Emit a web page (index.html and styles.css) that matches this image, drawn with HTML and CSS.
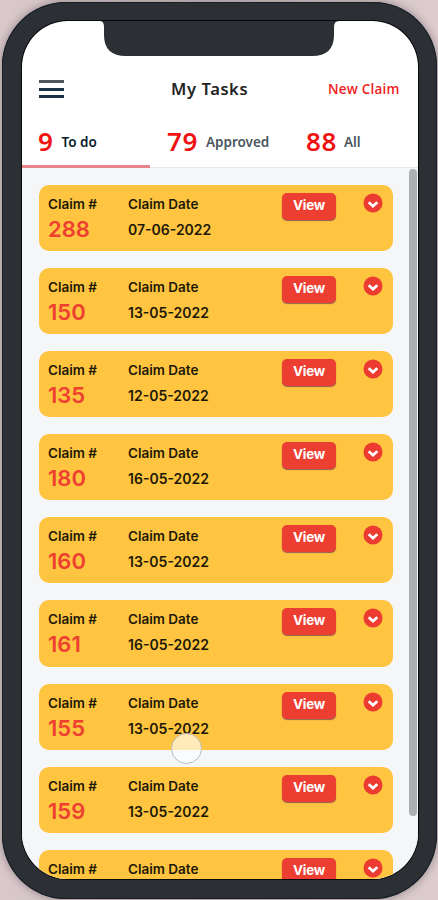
FILE: index.html
```html
<!DOCTYPE html>
<html lang="en">
<head>
<meta charset="utf-8">
<title>My Tasks</title>
<link rel="stylesheet" href="styles.css">
</head>
<body>
<div class="phone">
  <div class="screen">
    <svg class="notch" viewBox="0 0 239 36" aria-hidden="true"><path d="M0 0Q4 0 4 6V14Q4 35 26 35H212Q234 35 234 14V6Q234 0 239 0Z"/></svg>
    <header class="bar">
      <div class="menu"><i></i><i></i><i></i></div>
      <h1 class="title">My Tasks</h1>
      <a class="new">New Claim</a>
    </header>
    <nav class="tabs">
      <div class="tab active"><b>9</b><span>To do</span></div>
      <div class="tab approved"><b>79</b><span>Approved</span></div>
      <div class="tab all"><b>88</b><span>All</span></div>
    </nav>
    <main class="list" id="list"></main>
    <div class="scrollbar"></div>
    <div class="touch"></div>
  </div>
</div>
<script src="app.js"></script>
</body>
</html>
```
FILE: app.js
```js
const claims = [
  ["288", "07-06-2022"], ["150", "13-05-2022"], ["135", "12-05-2022"],
  ["180", "16-05-2022"], ["160", "13-05-2022"], ["161", "16-05-2022"],
  ["155", "13-05-2022"], ["159", "13-05-2022"], ["158", "13-05-2022"]
];
document.getElementById("list").innerHTML = claims.map(([id, date]) => `
  <article class="card">
    <div class="col claim"><span class="label">Claim #</span><span class="number">${id}</span></div>
    <div class="col when"><span class="label">Claim Date</span><span class="date">${date}</span></div>
    <button class="view">View</button>
    <svg class="expand" viewBox="0 0 20 20"><circle cx="10" cy="10" r="9.5"/><path d="M5.7 9.2L10 13.2L14.3 9.2"/></svg>
  </article>`).join("");
```
FILE: styles.css
```css
* { box-sizing: border-box; }
body {
  margin: 0;
  height: 900px;
  overflow: hidden;
  background: linear-gradient(90deg, #d9c9cb, #cbbcbf 50%, #ddcdcf);
  font-family: Inter, "Liberation Sans", sans-serif;
}
.phone {
  width: 435px;
  height: 897px;
  margin: 2px 0 0 2px;
  padding: 19px 19px 19px 20px;
  border-radius: 64px;
  background: #2c2f33;
  box-shadow: inset 0 0 0 1px #15202a, 0 0 10px #8f7f83;
}
.screen {
  position: relative;
  display: flex;
  flex-direction: column;
  height: 858px;
  overflow: hidden;
  border-radius: 46px;
  background: #fff;
  box-shadow: 0 0 0 1px #08090b;
}
.notch {
  position: absolute;
  top: 0;
  left: 78px;
  width: 239px;
  height: 36px;
  fill: #2c2f33;
}
.bar {
  display: flex;
  align-items: center;
  height: 26px;
  margin-top: 55px;
  padding-left: 17px;
}
.menu {
  display: flex;
  flex-direction: column;
  gap: 4.5px;
  width: 25px;
}
.menu i { height: 3px; background: #1b3147; }
.menu i:first-child { background: #50545b; }
.title {
  width: 157px;
  margin: 0 0 0 107px;
  font: 600 16.5px/26px "Noto Sans", sans-serif;
  letter-spacing: .6px;
  color: #222;
  white-space: nowrap;
}
.new {
  font: 600 13.5px/26px "Open Sans", sans-serif;
  letter-spacing: .22px;
  color: #ee1c1c;
  white-space: nowrap;
}
.tabs {
  display: flex;
  flex: none;
  height: 46px;
  margin-top: 20px;
  border-bottom: 1px solid #e6e9ea;
}
.tab {
  display: flex;
  height: 46px;
  padding-bottom: 8px;
  align-items: center;
  white-space: nowrap;
}
.tab b {
  font: 600 26px/38px "Noto Sans", sans-serif;
  letter-spacing: .6px;
  color: #f01313;
}
.tab span {
  margin: 1px 0 0 8px;
  font: 600 13.5px/20px "Noto Sans", sans-serif;
  color: #4b565e;
}
.active {
  width: 128px;
  padding: 0 0 5px 16px;
  border-bottom: 3px solid #ea868b;
}
.active span { color: #081b2b; }
.approved { width: 139px; padding-left: 17px; }
.all { padding-left: 17px; }
.all span { margin-left: 7px; }
.list {
  display: flex;
  flex-direction: column;
  flex: 1;
  min-height: 0;
  gap: 17px;
  padding: 17px 25px 0 17px;
  overflow: hidden;
  background: #f4f6f8;
}
.card {
  display: flex;
  flex: none;
  height: 66.1px;
  padding: 8px 9px;
  border-radius: 10px;
  background: #ffc440;
}
.col { display: flex; flex-direction: column; white-space: nowrap; }
.claim { width: 80px; }
.when { width: 154px; }
.label {
  height: 23px;
  font-size: 13.5px;
  font-weight: 600;
  line-height: 23px;
  color: #1d1907;
}
.number {
  font-size: 22px;
  font-weight: 600;
  line-height: 26px;
  color: #ee3f31;
}
.date {
  font-size: 14px;
  font-weight: 600;
  line-height: 27px;
  color: #1d1907;
}
.view {
  width: 54px;
  height: 27px;
  padding: 0 0 3px;
  border: 0;
  border-radius: 5px;
  background: #ed3e32;
  box-shadow: 0 1px 1px #916153;
  font: 700 13.5px/24px Inter, sans-serif;
  letter-spacing: -.3px;
  color: #fff;
}
.expand { width: 20px; height: 20px; margin-left: 27px; }
.expand circle { fill: #ec3b30; }
.expand path { fill: none; stroke: #fff; stroke-width: 2.8; }
.scrollbar {
  position: absolute;
  top: 148px;
  right: 1px;
  width: 8px;
  height: 647px;
  border-radius: 4px;
  background: #adafb1;
}
.touch {
  position: absolute;
  top: 712px;
  left: 149px;
  width: 31px;
  height: 31px;
  border: 1px solid #bbb;
  border-radius: 50%;
  background: rgba(255, 255, 255, .64);
}
```
